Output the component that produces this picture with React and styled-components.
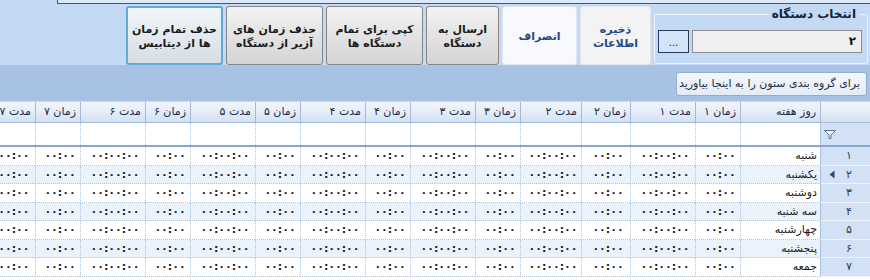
import React from "react";
import styled, { createGlobalStyle, css } from "styled-components";

const GlobalStyle = createGlobalStyle`
  html, body { margin: 0; padding: 0; background: #ffffff; }
  body { font-family: "DejaVu Sans", "Noto Sans", sans-serif; }
  * { box-sizing: border-box; }
`;

const FA = "۰۱۲۳۴۵۶۷۸۹";
const fa = (n) => String(n).replace(/\d/g, (d) => FA[d]);

const COLS = [50, 80, 45, 65, 49, 61, 45, 65, 45, 65, 45, 65, 45, 65, 45, 65];
const TEMPLATE = COLS.map((w) => `${w}px`).join(" ");
const TOTAL = COLS.reduce((a, b) => a + b, 0);

const columns = [
  { key: "day", label: "روز هفته", type: "day" },
  ...[1, 2, 3, 4, 5, 6, 7].flatMap((i) => [
    { key: `t${i}`, label: `زمان ${fa(i)}`, type: "time" },
    { key: `d${i}`, label: `مدت ${fa(i)}`, type: "dur" },
  ]),
];

const days = ["شنبه", "یکشنبه", "دوشنبه", "سه شنبه", "چهارشنبه", "پنجشنبه", "جمعه"];

const Page = styled.div`
  width: 870px;
  height: 280px;
  overflow: hidden;
  direction: rtl;
  display: flex;
  flex-direction: column;
`;

const TopStrip = styled.div`
  height: 4px;
  display: flex;
  background: #c4d9f3;
`;

const TopPanel = styled.div`
  width: 813px;
  background: #dce9f9;
  border-left: 1px solid #34589a;
  border-bottom: 1px solid #34589a;
`;

const Toolbar = styled.div`
  height: 62px;
  display: flex;
  align-items: flex-start;
  gap: 3px;
  padding: 2px 2px 0 0;
  background: #c4d9f3;
  border-bottom: 1px solid #aac3e3;
`;

const Fieldset = styled.fieldset`
  margin: 1px 0 0 0;
  width: 213px;
  height: 57px;
  padding: 9px 5px 0 3px;
  border: 1px solid #eef4fc;
  border-radius: 3px;
  display: flex;
  align-items: flex-start;
  gap: 3px;
`;

const Legend = styled.legend`
  padding: 0 3px;
  margin-right: 3px;
  font-size: 12px;
  font-weight: bold;
  color: #15243a;
  line-height: 14px;
`;

const TextBox = styled.div`
  width: 170px;
  height: 23px;
  border: 1px solid #8d8d8d;
  background: #efefef;
  font-size: 12px;
  font-weight: bold;
  color: #111;
  padding-right: 5px;
  line-height: 21px;
`;

const EllipsisButton = styled.div`
  width: 31px;
  height: 23px;
  border: 1px solid #283a55;
  background: #d3e4f9;
  font-size: 10px;
  color: #222;
  text-align: center;
  line-height: 23px;
  direction: ltr;
`;

const variants = {
  gray: css`
    background: linear-gradient(#f2f2f2, #e2e2e2 55%, #d4d4d4);
    border: 1px solid #858585;
    color: #1b1b1b;
  `,
  focus: css`
    background: linear-gradient(#f1f5f9, #e3e9ee 55%, #d6dde3);
    border: 2px solid #61a9d8;
    color: #1b1b1b;
  `,
  save: css`
    background: #f3f3f3;
    border: 1px solid #e4e8ee;
    color: #1f4a86;
  `,
  cancel: css`
    background: #f7f9fc;
    border: 1px solid #dfe7f1;
    color: #1f4a86;
  `,
};

const ToolButton = styled.div`
  width: ${(p) => p.$w}px;
  height: 59px;
  border-radius: 3px;
  display: flex;
  flex-direction: column;
  align-items: center;
  justify-content: center;
  padding-top: 2px;
  font-size: 11px;
  font-weight: bold;
  line-height: 14px;
  text-align: center;
  white-space: nowrap;
  ${(p) => variants[p.$variant]}
`;

const GroupPanel = styled.div`
  height: 35px;
  background: #a8c2e3;
  padding: 6px 3px 0 0;
  display: flex;
`;

const GroupHint = styled.div`
  width: 191px;
  height: 24px;
  border: 1px solid #93acd0;
  border-radius: 3px;
  background: linear-gradient(#f5f8fc, #e2ebf6);
  font-size: 11px;
  color: #1e2a3c;
  line-height: 22px;
  padding-right: 6px;
  white-space: nowrap;
`;

const GridArea = styled.div`
  flex: 1;
  overflow: hidden;
  background: #ffffff;
`;

const GridInner = styled.div`
  width: ${TOTAL}px;
`;

const Row = styled.div`
  display: grid;
  grid-template-columns: ${TEMPLATE};
  height: ${(p) => p.$h}px;
`;

const HeaderRow = styled(Row)`
  background: linear-gradient(#f2f6fc, #e4edf8 50%, #d3e1f3);
  border-top: 1px solid #c9d9ee;
  border-bottom: 1px solid #a5bcdb;
`;

const HeaderCell = styled.div`
  border-left: 1px solid #a3b9d7;
  font-size: 11px;
  color: #1b2c47;
  line-height: 20px;
  padding-right: 4px;
  white-space: nowrap;
  overflow: hidden;
`;

const FilterRow = styled(Row)`
  border-bottom: 2px solid #86a6d2;
`;

const FilterCell = styled.div`
  border-left: 1px dotted #b3c5dd;
  background: #ffffff;
`;

const IndicatorCell = styled.div`
  background: #d2e1f3;
  border-left: 1px solid #a9bfdc;
  border-bottom: 1px solid ${(p) => (p.$light ? "#eef4fb" : "transparent")};
  display: flex;
  align-items: center;
  justify-content: ${(p) => (p.$end ? "flex-end" : "space-between")};
  padding: 0 17px 0 8px;
  font-size: 11px;
  color: #2a3e5c;
`;

const FilterIndicator = styled(IndicatorCell)`
  padding: 0 0 0 2px;
`;

const DataRow = styled(Row)`
  background: ${(p) => (p.$alt ? "#eaf2fc" : "#ffffff")};
`;

const DataCell = styled.div`
  border-left: 1px dotted #b0c3dc;
  border-bottom: 1px dotted #b0c3dc;
  font-size: 11px;
  font-weight: ${(p) => (p.$day ? "normal" : "bold")};
  color: #1a1a1a;
  display: flex;
  align-items: center;
  justify-content: ${(p) => (p.$day ? "flex-start" : "center")};
  padding: ${(p) => (p.$day ? "0 3px 0 0" : "0 0 0 4px")};
  white-space: nowrap;
  overflow: hidden;
`;

const Num = styled.span`
  width: 8px;
  text-align: center;
`;

const FunnelIcon = () => (
  <svg width="14" height="12" viewBox="0 0 14 12">
    <path d="M1.5 2.5 H12.5 L8 7 V10.5 H6 V7 Z" fill="#eef3fa" stroke="#5f7596" strokeWidth="1" />
  </svg>
);

const ArrowIcon = () => (
  <svg width="6" height="9" viewBox="0 0 6 9">
    <path d="M5.5 0.5 V8.5 L0.5 4.5 Z" fill="#24477c" />
  </svg>
);

const buttons = [
  { w: 71, v: "save", lines: ["ذخیره", "اطلاعات"] },
  { w: 75, v: "cancel", lines: ["انصراف"] },
  { w: 73, v: "gray", lines: ["ارسال به", "دستگاه"] },
  { w: 97, v: "gray", lines: ["کپی برای تمام", "دستگاه ها"] },
  { w: 97, v: "gray", lines: ["حذف زمان های", "آزیر از دستگاه"] },
  { w: 97, v: "focus", lines: ["حذف تمام زمان", "ها از دیتابیس"] },
];

export default function App() {
  return (
    <>
      <GlobalStyle />
      <Page>
        <TopStrip>
          <TopPanel />
        </TopStrip>
        <Toolbar>
          <Fieldset>
            <Legend>انتخاب دستگاه</Legend>
            <TextBox>{fa(2)}</TextBox>
            <EllipsisButton>...</EllipsisButton>
          </Fieldset>
          {buttons.map((b, i) => (
            <ToolButton key={i} $w={b.w} $variant={b.v}>
              {b.lines.map((l, j) => (
                <span key={j}>{l}</span>
              ))}
            </ToolButton>
          ))}
        </Toolbar>
        <GroupPanel>
          <GroupHint>برای گروه بندی ستون را به اینجا بیاورید</GroupHint>
        </GroupPanel>
        <GridArea>
          <GridInner>
            <HeaderRow $h={22}>
              <HeaderCell />
              {columns.map((c) => (
                <HeaderCell key={c.key}>{c.label}</HeaderCell>
              ))}
            </HeaderRow>
            <FilterRow $h={24}>
              <FilterIndicator $end>
                <FunnelIcon />
              </FilterIndicator>
              {columns.map((c) => (
                <FilterCell key={c.key} />
              ))}
            </FilterRow>
            {days.map((d, r) => (
              <DataRow key={d} $h={18.5} $alt={r % 2 === 1}>
                <IndicatorCell $light>
                  <Num>{fa(r + 1)}</Num>
                  {r === 1 ? <ArrowIcon /> : <span />}
                </IndicatorCell>
                {columns.map((c) => (
                  <DataCell key={c.key} $day={c.type === "day"}>
                    {c.type === "day" ? d : c.type === "time" ? "۰۰:۰۰" : "۰۰:۰۰:۰۰"}
                  </DataCell>
                ))}
              </DataRow>
            ))}
          </GridInner>
        </GridArea>
      </Page>
    </>
  );
}
